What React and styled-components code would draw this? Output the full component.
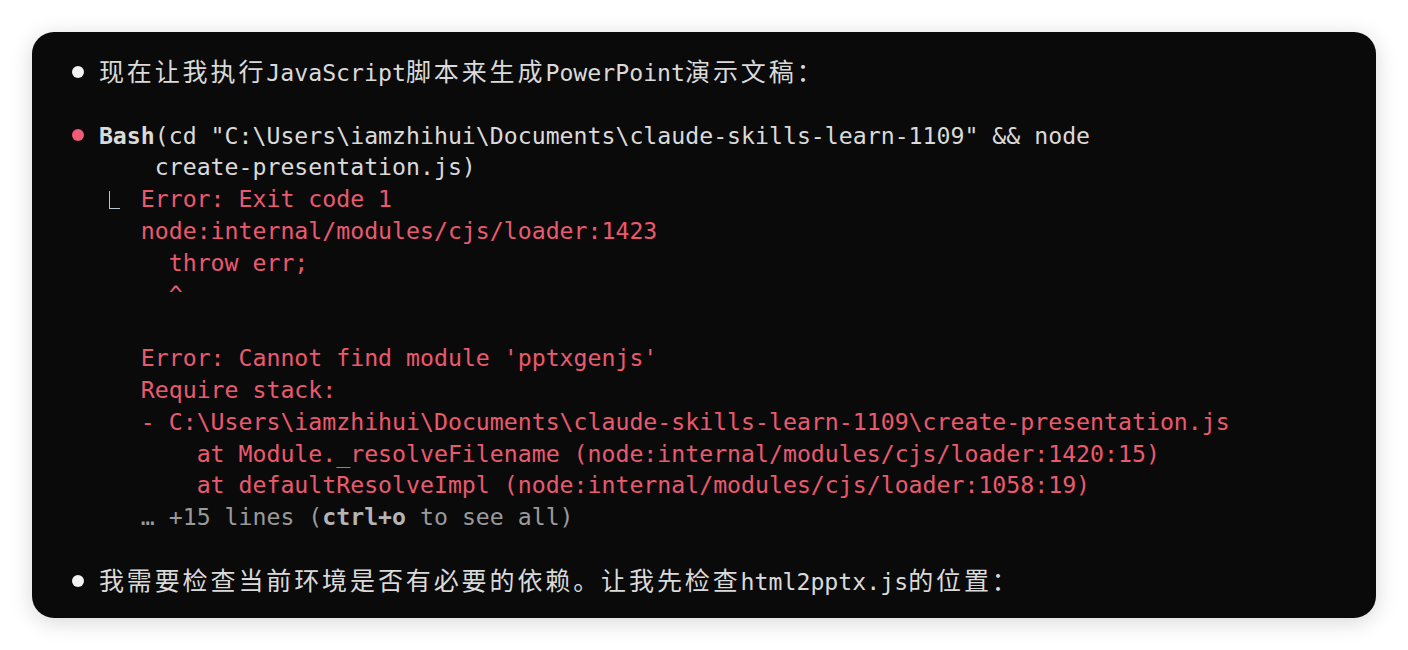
import React from "react";
import styled, { createGlobalStyle } from "styled-components";

const GlobalStyle = createGlobalStyle`
  html, body {
    margin: 0;
    padding: 0;
    background: #ffffff;
  }
`;

const Page = styled.div`
  padding: 32px;
`;

const Terminal = styled.div`
  background: #0a0a0a;
  border-radius: 22px;
  padding: 24px 39px 21px;
  box-shadow: 0 4px 22px rgba(0, 0, 0, 0.16);
  font-family: "DejaVu Sans Mono", "Liberation Mono", "Noto Sans CJK SC", monospace;
  font-size: 23.2px;
  line-height: 31.8px;
  color: #dadada;
  white-space: pre;
`;

const Line = styled.div`
  height: 31.8px;
  padding-left: ${(p) => p.$indent || 0}ch;
  color: ${(p) => (p.$tone === "error" ? "#ea5a6e" : p.$tone === "muted" ? "#9a9a9a" : "#dadada")};
  display: flex;
  align-items: center;
`;

const Bullet = styled.span`
  width: 2ch;
  flex: none;
  display: flex;
  align-items: center;
  &::before {
    content: "";
    width: 12px;
    height: 12px;
    margin-left: 1px;
    border-radius: 50%;
    background: ${(p) => (p.$red ? "#ef5b76" : "#f2f2f2")};
  }
`;

const Corner = styled.span`
  width: 3ch;
  flex: none;
  align-self: stretch;
  position: relative;
  &::before {
    content: "";
    position: absolute;
    left: 10px;
    top: 8px;
    width: 10px;
    height: 17px;
    border-left: 1.5px solid #b9c3d6;
    border-bottom: 1.5px solid #b9c3d6;
  }
`;

const Cjk = styled.span`
  font-family: "Noto Sans CJK SC", sans-serif;
  font-size: 25px;
  letter-spacing: 2.9px;
`;

const Strong = styled.b`
  font-weight: bold;
  color: ${(p) => p.$color || "inherit"};
`;

export default function App() {
  return (
    <Page>
      <GlobalStyle />
      <Terminal>
        <Line>
          <Bullet />
          <span>
            <Cjk>现在让我执行</Cjk>JavaScript<Cjk>脚本来生成</Cjk>PowerPoint<Cjk>演示文稿：</Cjk>
          </span>
        </Line>
        <Line />
        <Line>
          <Bullet $red />
          <span>
            <Strong>Bash</Strong>(cd "C:\Users\iamzhihui\Documents\claude-skills-learn-1109" &amp;&amp; node
          </span>
        </Line>
        <Line $indent={6}>create-presentation.js)</Line>
        <Line $indent={2} $tone="error">
          <Corner />
          <span>Error: Exit code 1</span>
        </Line>
        <Line $indent={5} $tone="error">node:internal/modules/cjs/loader:1423</Line>
        <Line $indent={7} $tone="error">throw err;</Line>
        <Line $indent={7} $tone="error">^</Line>
        <Line />
        <Line $indent={5} $tone="error">Error: Cannot find module 'pptxgenjs'</Line>
        <Line $indent={5} $tone="error">Require stack:</Line>
        <Line $indent={5} $tone="error">- C:\Users\iamzhihui\Documents\claude-skills-learn-1109\create-presentation.js</Line>
        <Line $indent={9} $tone="error">at Module._resolveFilename (node:internal/modules/cjs/loader:1420:15)</Line>
        <Line $indent={9} $tone="error">at defaultResolveImpl (node:internal/modules/cjs/loader:1058:19)</Line>
        <Line $indent={5} $tone="muted">
          <span>
            … +15 lines (<Strong $color="#b4b4b4">ctrl+o</Strong> to see all)
          </span>
        </Line>
        <Line />
        <Line>
          <Bullet />
          <span>
            <Cjk>我需要检查当前环境是否有必要的依赖。让我先检查</Cjk>html2pptx.js<Cjk>的位置：</Cjk>
          </span>
        </Line>
      </Terminal>
    </Page>
  );
}
